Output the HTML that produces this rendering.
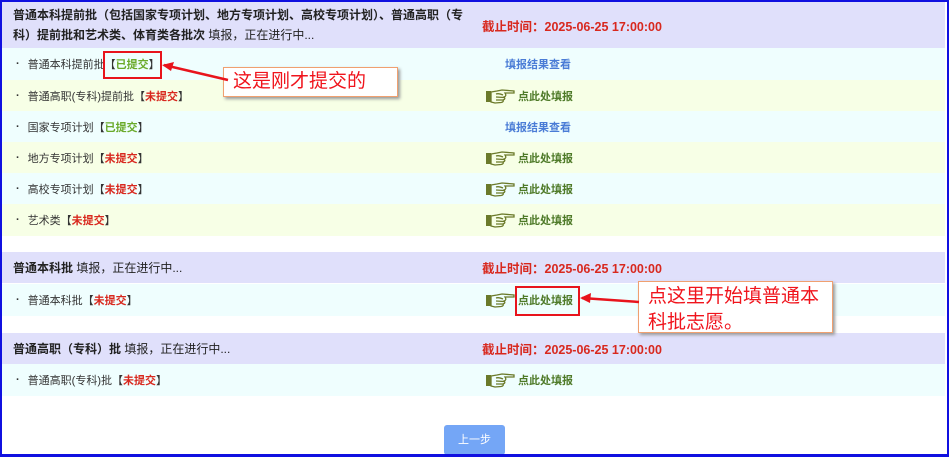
<!DOCTYPE html>
<html><head><meta charset="utf-8"><style>
*{margin:0;padding:0;box-sizing:border-box}
body{width:949px;height:457px;background:#fff;position:relative;overflow:hidden;font-family:"Liberation Sans","Noto Sans CJK SC",sans-serif;font-size:11px;color:#333}
.frame{position:absolute;left:0;top:0;width:949px;height:457px;border:2px solid #1010e0;border-bottom:3px solid #1010e0;pointer-events:none;z-index:5}
.r{position:absolute;left:2px;width:943px}
.c1,.c2{position:absolute;top:0;bottom:0;display:flex;align-items:center}
.c1{left:0;width:472px;padding-left:14px}
.c2{left:474px;width:469px}
.hd{background:#e0e0fb}
.cy{background:#effefe}
.yl{background:#f7ffe6}
.hd .c1{font-size:12px;color:#222;padding-left:11px}
b{font-weight:bold}
.dl{color:#d8281e;font-weight:bold;font-size:12.5px;padding-left:6px}
.dot{margin-right:8px;font-weight:bold}
.g{color:#6aaa2a;font-weight:bold}
.red{color:#d8281e;font-weight:bold}
.view{color:#4a7cd6;font-weight:bold;padding-left:29px}
.fill{color:#4e7a28;font-weight:bold;display:flex;align-items:flex-end;padding-left:9px}
.fill svg{margin-right:3px}
.box{position:absolute;border:2px solid #e8141c;z-index:6}
.call{position:absolute;background:#fff;border:1px solid #f0a070;box-shadow:2px 2px 3px #999;color:#f0141c;font-size:19px;line-height:26px;z-index:6;padding:2px 9px}
.btn{position:absolute;left:444px;top:425px;width:61px;height:30px;background:#74a6f6;border-radius:3px;color:#fff;font-size:11px;text-align:center;line-height:30px}
</style></head><body>
<div class="frame"></div>

<div class="r hd" style="top:2px;height:46px"><div class="c1" style="line-height:20px;padding-right:4px"><span><b>普通本科提前批（包括国家专项计划、地方专项计划、高校专项计划）、普通高职（专科）提前批和艺术类、体育类各批次</b> 填报，正在进行中...</span></div><div class="c2"><span class="dl">截止时间：2025-06-25 17:00:00</span></div></div>

<div class="r cy" style="top:48px;height:32px"><div class="c1"><span class="dot">·</span>普通本科提前批【 <span class="g">已提交</span> 】</div><div class="c2"><span class="view">填报结果查看</span></div></div>
<div class="r yl" style="top:80px;height:31px"><div class="c1"><span class="dot">·</span>普通高职(专科)提前批【 <span class="red">未提交</span> 】</div><div class="c2"><span class="fill"><svg width="30" height="15" viewBox="0 0 30 15"><rect x="1" y="2" width="5" height="11" fill="#6b7a2a"/><path d="M6 3 L12 2 L17 1 L29 2 L29 4 L20 4 Q22 7 19 8 Q21 10 18 11 Q19 13 16 13.5 L10 14 L6 13 Z M11 5 Q14 4 18 6 M11 8 L19 8.5 M11 11 L18 11" fill="none" stroke="#6b7a2a" stroke-width="1.3"/></svg>点此处填报</span></div></div>
<div class="r cy" style="top:111px;height:31px"><div class="c1"><span class="dot">·</span>国家专项计划【 <span class="g">已提交</span> 】</div><div class="c2"><span class="view">填报结果查看</span></div></div>
<div class="r yl" style="top:142px;height:31px"><div class="c1"><span class="dot">·</span>地方专项计划【 <span class="red">未提交</span> 】</div><div class="c2"><span class="fill"><svg width="30" height="15" viewBox="0 0 30 15"><rect x="1" y="2" width="5" height="11" fill="#6b7a2a"/><path d="M6 3 L12 2 L17 1 L29 2 L29 4 L20 4 Q22 7 19 8 Q21 10 18 11 Q19 13 16 13.5 L10 14 L6 13 Z M11 5 Q14 4 18 6 M11 8 L19 8.5 M11 11 L18 11" fill="none" stroke="#6b7a2a" stroke-width="1.3"/></svg>点此处填报</span></div></div>
<div class="r cy" style="top:173px;height:31px"><div class="c1"><span class="dot">·</span>高校专项计划【 <span class="red">未提交</span> 】</div><div class="c2"><span class="fill"><svg width="30" height="15" viewBox="0 0 30 15"><rect x="1" y="2" width="5" height="11" fill="#6b7a2a"/><path d="M6 3 L12 2 L17 1 L29 2 L29 4 L20 4 Q22 7 19 8 Q21 10 18 11 Q19 13 16 13.5 L10 14 L6 13 Z M11 5 Q14 4 18 6 M11 8 L19 8.5 M11 11 L18 11" fill="none" stroke="#6b7a2a" stroke-width="1.3"/></svg>点此处填报</span></div></div>
<div class="r yl" style="top:204px;height:32px"><div class="c1"><span class="dot">·</span>艺术类【 <span class="red">未提交</span> 】</div><div class="c2"><span class="fill"><svg width="30" height="15" viewBox="0 0 30 15"><rect x="1" y="2" width="5" height="11" fill="#6b7a2a"/><path d="M6 3 L12 2 L17 1 L29 2 L29 4 L20 4 Q22 7 19 8 Q21 10 18 11 Q19 13 16 13.5 L10 14 L6 13 Z M11 5 Q14 4 18 6 M11 8 L19 8.5 M11 11 L18 11" fill="none" stroke="#6b7a2a" stroke-width="1.3"/></svg>点此处填报</span></div></div>

<div class="r hd" style="top:252px;height:31px"><div class="c1"><span><b>普通本科批</b> 填报，正在进行中...</span></div><div class="c2"><span class="dl">截止时间：2025-06-25 17:00:00</span></div></div>
<div class="r cy" style="top:284px;height:32px"><div class="c1"><span class="dot">·</span>普通本科批【 <span class="red">未提交</span> 】</div><div class="c2"><span class="fill"><svg width="30" height="15" viewBox="0 0 30 15"><rect x="1" y="2" width="5" height="11" fill="#6b7a2a"/><path d="M6 3 L12 2 L17 1 L29 2 L29 4 L20 4 Q22 7 19 8 Q21 10 18 11 Q19 13 16 13.5 L10 14 L6 13 Z M11 5 Q14 4 18 6 M11 8 L19 8.5 M11 11 L18 11" fill="none" stroke="#6b7a2a" stroke-width="1.3"/></svg>点此处填报</span></div></div>

<div class="r hd" style="top:333px;height:31px"><div class="c1"><span><b>普通高职（专科）批</b> 填报，正在进行中...</span></div><div class="c2"><span class="dl">截止时间：2025-06-25 17:00:00</span></div></div>
<div class="r cy" style="top:364px;height:32px"><div class="c1"><span class="dot">·</span>普通高职(专科)批【 <span class="red">未提交</span> 】</div><div class="c2"><span class="fill"><svg width="30" height="15" viewBox="0 0 30 15"><rect x="1" y="2" width="5" height="11" fill="#6b7a2a"/><path d="M6 3 L12 2 L17 1 L29 2 L29 4 L20 4 Q22 7 19 8 Q21 10 18 11 Q19 13 16 13.5 L10 14 L6 13 Z M11 5 Q14 4 18 6 M11 8 L19 8.5 M11 11 L18 11" fill="none" stroke="#6b7a2a" stroke-width="1.3"/></svg>点此处填报</span></div></div>

<div class="btn">上一步</div>

<div class="box" style="left:103px;top:51px;width:59px;height:28px"></div>
<div class="call" style="left:223px;top:67px;width:175px;height:30px;padding:1px 9px">这是刚才提交的</div>
<svg style="position:absolute;left:160px;top:60px;z-index:7" width="70" height="25"><path d="M68 20 L4 5" stroke="#e8141c" stroke-width="2.5"/><path d="M2 5 L14 2 L11 11 Z" fill="#e8141c"/></svg>

<div class="box" style="left:515px;top:286px;width:65px;height:30px"></div>
<div class="call" style="left:638px;top:281px;width:195px;height:52px">点这里开始填普通本科批志愿。</div>
<svg style="position:absolute;left:578px;top:292px;z-index:7" width="62" height="16"><path d="M61 10 L4 6" stroke="#e8141c" stroke-width="2.5"/><path d="M2 6 L13 1 L12 11 Z" fill="#e8141c"/></svg>
</body></html>
